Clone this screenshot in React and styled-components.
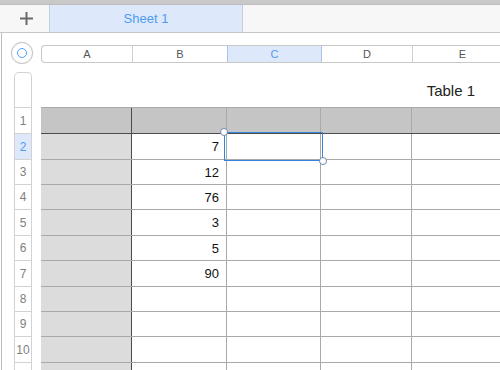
import React from 'react';
import styled, { createGlobalStyle, css } from 'styled-components';

const GlobalStyle = createGlobalStyle`
  html, body {
    margin: 0;
    padding: 0;
    background: #ffffff;
    font-family: "Helvetica Neue", Helvetica, "Liberation Sans", Arial, sans-serif;
    overflow: hidden;
  }
`;

const Page = styled.div`
  width: 500px;
  height: 370px;
  overflow: hidden;
  display: flex;
  flex-direction: column;
`;

const TopStrip = styled.div`
  height: 4px;
  background: #c9c9c9;
  border-bottom: 1px solid #bdbdbd;
  flex-shrink: 0;
`;

const TabBar = styled.div`
  height: 27px;
  display: flex;
  background: #f7f7f7;
  border-bottom: 1px solid #c6c6c6;
  flex-shrink: 0;
`;

const AddButton = styled.div`
  box-sizing: border-box;
  width: 49px;
  display: flex;
  align-items: center;
  justify-content: center;
  padding-left: 3px;
  color: #6a6a6a;
`;

const SheetTab = styled.div`
  box-sizing: border-box;
  width: 194px;
  display: flex;
  align-items: center;
  justify-content: center;
  background: #dde9fb;
  border-left: 1px solid #c3cfe0;
  border-right: 1px solid #c3cfe0;
  color: #4f9bf0;
  font-size: 13px;
`;

const Workspace = styled.div`
  flex: 1;
  display: flex;
  background-image: linear-gradient(to right, transparent 1px, #bdbdbd 1px, #bdbdbd 2px, transparent 2px);
`;

const Gutter = styled.div`
  width: 41px;
  flex-shrink: 0;
  display: flex;
  flex-direction: column;
`;

const SelectAll = styled.div`
  width: 20px;
  height: 20px;
  margin: 9px 0 0 11px;
  border-radius: 50%;
  border: 1px solid #c4c4c4;
  box-shadow: 0 0 1px rgba(0, 0, 0, 0.15);
  background: #fff;
  display: flex;
  align-items: center;
  justify-content: center;

  &::after {
    content: '';
    width: 8px;
    height: 8px;
    border-radius: 50%;
    border: 1.7px solid #4fa0f5;
  }
`;

const RowRail = styled.div`
  margin: 8px 0 0 14px;
  width: 16px;
  border: 1px solid #d2d2d2;
  border-bottom: none;
  border-top-left-radius: 5px;
  border-top-right-radius: 5px;
  background: #fff;
`;

const RailTop = styled.div`
  height: 34px;
  border-bottom: 1px solid #d2d2d2;
`;

const RowLabel = styled.div`
  box-sizing: border-box;
  height: ${(p) => p.$h}px;
  border-bottom: 1px solid #d2d2d2;
  display: flex;
  align-items: center;
  justify-content: center;
  font-size: 12px;
  color: #7f7f7f;
  ${(p) =>
    p.$active &&
    css`
      background: #dde9fb;
      color: #4f9bf0;
    `}
`;

const Sheet = styled.div`
  flex: 1;
  display: flex;
  flex-direction: column;
  min-width: 0;
`;

const ColumnBar = styled.div`
  margin-top: 12px;
  height: 16px;
  display: flex;
  border: 1px solid #c8c8c8;
  border-right: none;
  border-top-left-radius: 4px;
  border-bottom-left-radius: 4px;
  background: #fff;
`;

const ColumnLabel = styled.div`
  box-sizing: border-box;
  width: ${(p) => p.$w}px;
  flex-shrink: 0;
  border-right: 1px solid #d2d2d2;
  display: flex;
  align-items: center;
  justify-content: center;
  font-size: 11px;
  color: #555;
  ${(p) =>
    p.$active &&
    css`
      background: #dde9fb;
      color: #4f9bf0;
      border-left: 1px solid #a9c5e6;
      border-right: 1px solid #a9c5e6;
      margin-left: -1px;
      width: ${p.$w + 1}px;
    `}
`;

const TitleBlock = styled.div`
  height: 44px;
  display: flex;
  align-items: flex-end;
  justify-content: flex-end;
  padding: 0 25px 8px 0;
  box-sizing: border-box;
  font-size: 15px;
  color: #222;
`;

const Table = styled.div`
  border-top: 1px solid #a9a9a9;
  display: flex;
  flex-direction: column;
`;

const Row = styled.div`
  box-sizing: border-box;
  height: ${(p) => p.$h}px;
  display: flex;
  border-bottom: 1px solid ${(p) => (p.$header ? '#4c4c4c' : '#a9a9a9')};
  background: ${(p) => (p.$header ? '#c4c5c4' : '#ffffff')};
`;

const Cell = styled.div`
  position: relative;
  box-sizing: border-box;
  width: ${(p) => p.$w}px;
  flex-shrink: 0;
  border-right: 1px solid ${(p) => (p.$divider ? '#4c4c4c' : '#a9a9a9')};
  background: ${(p) => (p.$shade ? '#dcdcdc' : 'transparent')};
  display: flex;
  align-items: center;
  justify-content: flex-end;
  padding-right: 7px;
  font-size: 13px;
  color: #111;
`;

const Selection = styled.div`
  position: absolute;
  z-index: 5;
  left: -3px;
  top: -2px;
  width: 97px;
  height: 27px;
  border: 1px solid #3384dc;
  pointer-events: none;
`;

const Handle = styled.span`
  position: absolute;
  width: 6px;
  height: 6px;
  border-radius: 50%;
  background: #fff;
  border: 1px solid #6d88ad;
  ${(p) =>
    p.$end
      ? css`
          right: -5px;
          bottom: -5px;
        `
      : css`
          left: -5px;
          top: -5px;
        `}
`;

const columns = [
  { name: 'A', w: 91 },
  { name: 'B', w: 95 },
  { name: 'C', w: 94 },
  { name: 'D', w: 91 },
  { name: 'E', w: 100 },
];

const rowHeights = [26, 26, 25, 25, 26, 25, 26, 25, 25, 26, 26];
const values = ['', '7', '12', '76', '3', '5', '90', '', '', '', ''];

const PlusIcon = () => (
  <svg width="15" height="15" viewBox="0 0 15 15">
    <path d="M7.5 1v13M1 7.5h13" stroke="currentColor" strokeWidth="2" />
  </svg>
);

export default function App() {
  return (
    <Page>
      <GlobalStyle />
      <TopStrip />
      <TabBar>
        <AddButton>
          <PlusIcon />
        </AddButton>
        <SheetTab>Sheet 1</SheetTab>
      </TabBar>
      <Workspace>
        <Gutter>
          <SelectAll />
          <RowRail>
            <RailTop />
            {rowHeights.map((h, i) => (
              <RowLabel key={i} $h={h} $active={i === 1}>
                {i < 10 ? i + 1 : ''}
              </RowLabel>
            ))}
          </RowRail>
        </Gutter>
        <Sheet>
          <ColumnBar>
            {columns.map((c) => (
              <ColumnLabel key={c.name} $w={c.w} $active={c.name === 'C'}>
                {c.name}
              </ColumnLabel>
            ))}
          </ColumnBar>
          <TitleBlock>Table 1</TitleBlock>
          <Table>
            {rowHeights.map((h, r) => (
              <Row key={r} $h={h} $header={r === 0}>
                {columns.map((c, ci) => (
                  <Cell key={c.name} $w={c.w} $divider={ci === 0} $shade={ci === 0 && r > 0}>
                    {ci === 1 ? values[r] : ''}
                    {ci === 2 && r === 1 && (
                      <Selection>
                        <Handle />
                        <Handle $end />
                      </Selection>
                    )}
                  </Cell>
                ))}
              </Row>
            ))}
          </Table>
        </Sheet>
      </Workspace>
    </Page>
  );
}
